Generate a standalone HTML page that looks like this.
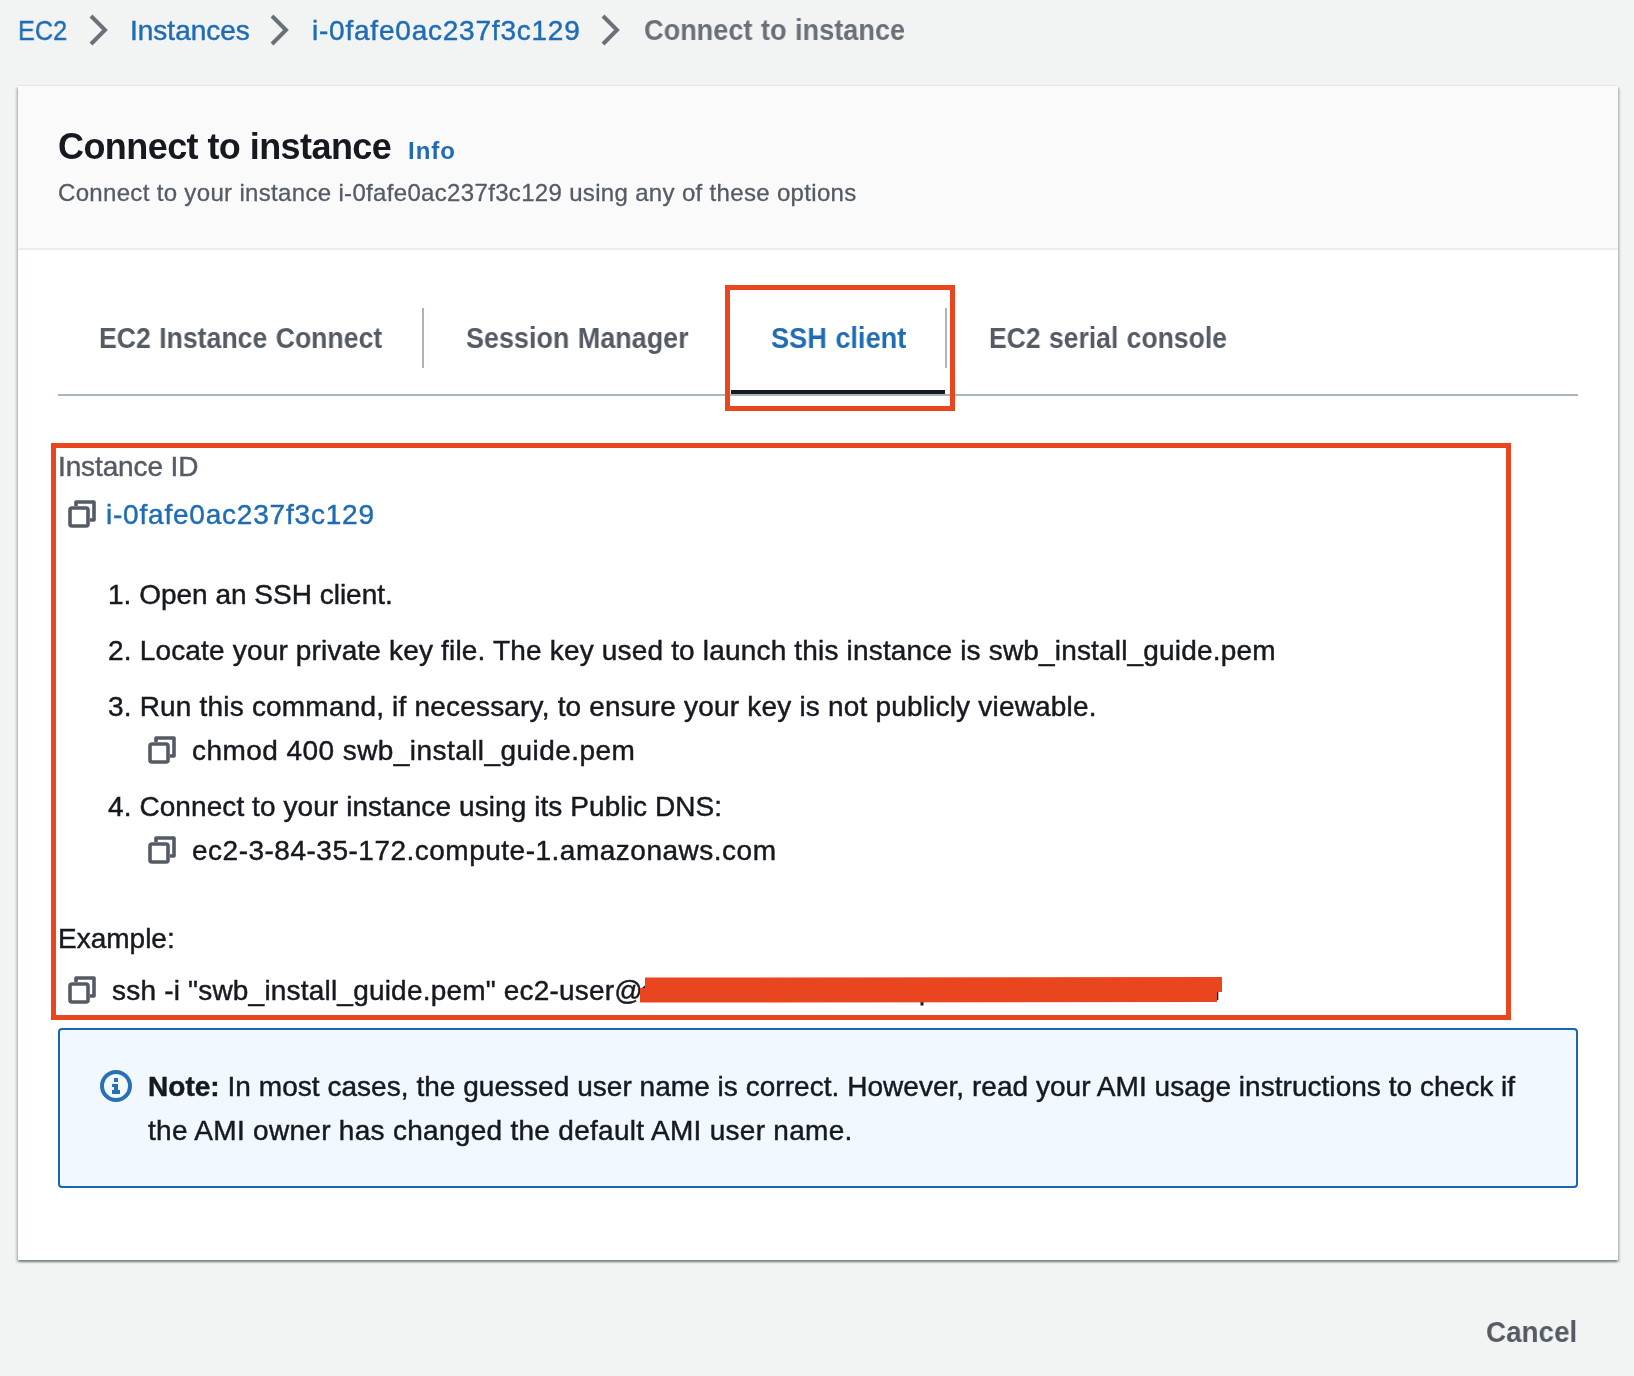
<!DOCTYPE html>
<html>
<head>
<meta charset="utf-8">
<style>
html,body{margin:0;padding:0;background:#f2f3f3;}
body{width:1634px;height:1376px;overflow:hidden;background:#f2f3f3;position:relative;font-family:"Liberation Sans",sans-serif;color:#16191f;}
.t{position:absolute;line-height:0;white-space:nowrap;will-change:transform;}
.r28{font-size:28px;font-weight:400;-webkit-text-stroke:0.45px currentColor;}
.b28{font-size:29px;font-weight:700;}
.blue{color:#1f6cb4;}
.grey{color:#545b64;}
.g2{color:#687078;}
.abs{position:absolute;}
#card{position:absolute;left:18px;top:86px;width:1600px;height:1174px;background:#fff;
  box-shadow:0 2px 2px 0 rgba(0,28,36,.32),2px 2px 2px 0 rgba(0,28,36,.15),-2px 2px 2px 0 rgba(0,28,36,.15),0 -1px 1px 0 rgba(0,28,36,.05);}
#hdr{position:absolute;left:0;top:0;width:1600px;height:162px;background:#fafafa;border-bottom:2px solid #eaeded;}
svg{position:absolute;overflow:visible;}
</style>
</head>
<body>
<!-- breadcrumb -->
<div id="bc1" class="t r28 blue" style="left:18px;top:31px;transform:scaleX(0.9);transform-origin:0 0;">EC2</div>
<svg style="left:0;top:0" width="1" height="1"><polyline points="91,16 105,30 91,44" fill="none" stroke="#687078" stroke-width="4"/></svg>
<div id="bc2" class="t r28 blue" style="left:130px;top:31px;">Instances</div>
<svg style="left:0;top:0" width="1" height="1"><polyline points="272,16 286,30 272,44" fill="none" stroke="#687078" stroke-width="4"/></svg>
<div id="bc3" class="t r28 blue" style="left:312px;top:31px;letter-spacing:0.78px;">i-0fafe0ac237f3c129</div>
<svg style="left:0;top:0" width="1" height="1"><polyline points="603,16 617,30 603,44" fill="none" stroke="#687078" stroke-width="4"/></svg>
<div id="bc4" class="t b28 g2" style="left:643.90px;top:30px;transform:scaleX(0.9352);transform-origin:0 0;word-spacing:1.0px;">Connect to instance</div>

<div id="card">
  <div id="hdr"></div>
</div>

<!-- header -->
<div id="title" class="t" style="left:58px;top:147px;font-size:36px;font-weight:700;color:#16191f;letter-spacing:-0.57px;">Connect to instance</div>
<div id="info" class="t blue" style="left:408px;top:151px;font-size:24px;font-weight:700;letter-spacing:1.0px;">Info</div>
<div id="sub" class="t grey" style="left:58px;top:193px;font-size:24px;-webkit-text-stroke:0.3px currentColor;letter-spacing:0.33px;">Connect to your instance i-0fafe0ac237f3c129 using any of these options</div>

<!-- tabs -->
<div id="tab1" class="t b28 grey" style="left:99.36px;top:338px;transform:scaleX(0.9190);transform-origin:0 0;word-spacing:1.0px;">EC2 Instance Connect</div>
<div class="abs" style="left:422px;top:308px;width:2px;height:60px;background:#aab7b8"></div>
<div id="tab2" class="t b28 grey" style="left:465.75px;top:338px;transform:scaleX(0.9295);transform-origin:0 0;word-spacing:1.0px;">Session Manager</div>
<div id="tab3" class="t b28 blue" style="left:771.13px;top:338px;transform:scaleX(0.9366);transform-origin:0 0;word-spacing:1.0px;">SSH client</div>
<div class="abs" style="left:945px;top:308px;width:2px;height:60px;background:#aab7b8"></div>
<div id="tab4" class="t b28 grey" style="left:988.95px;top:338px;transform:scaleX(0.9156);transform-origin:0 0;word-spacing:1.0px;">EC2 serial console</div>
<div class="abs" style="left:58px;top:394px;width:1520px;height:2px;background:#aab7b8"></div>
<div class="abs" style="left:731px;top:390px;width:214px;height:4px;background:#16191f"></div>

<!-- content -->
<div id="iid" class="t r28 grey" style="left:58px;top:467px;letter-spacing:-0.12px;">Instance ID</div>
<svg style="left:0;top:0" width="1" height="1"><g fill="none" stroke="#545b64" stroke-width="3.6" stroke-linejoin="round"><rect x="70" y="508" width="18" height="18" rx="2"/><path d="M76,506 V502 H94 V520 H90"/></g></svg>
<div id="iidv" class="t r28 blue" style="left:106px;top:515px;letter-spacing:0.79px;">i-0fafe0ac237f3c129</div>

<div id="li1" class="t r28" style="left:108px;top:595px;">1. Open an SSH client.</div>
<div id="li2" class="t r28" style="left:108px;top:651px;letter-spacing:0.175px;">2. Locate your private key file. The key used to launch this instance is swb_install_guide.pem</div>
<div id="li3" class="t r28" style="left:108px;top:707px;letter-spacing:0.19px;">3. Run this command, if necessary, to ensure your key is not publicly viewable.</div>
<svg style="left:80px;top:236px" width="1" height="1"><g fill="none" stroke="#545b64" stroke-width="3.6" stroke-linejoin="round"><rect x="70" y="508" width="18" height="18" rx="2"/><path d="M76,506 V502 H94 V520 H90"/></g></svg>
<div id="cmd1" class="t r28" style="left:192px;top:751px;letter-spacing:0.44px;">chmod 400 swb_install_guide.pem</div>
<div id="li4" class="t r28" style="left:108px;top:807px;letter-spacing:0.083px;">4. Connect to your instance using its Public DNS:</div>
<svg style="left:80px;top:336px" width="1" height="1"><g fill="none" stroke="#545b64" stroke-width="3.6" stroke-linejoin="round"><rect x="70" y="508" width="18" height="18" rx="2"/><path d="M76,506 V502 H94 V520 H90"/></g></svg>
<div id="cmd2" class="t r28" style="left:192px;top:851px;letter-spacing:0.5px;">ec2-3-84-35-172.compute-1.amazonaws.com</div>

<div id="ex" class="t r28" style="left:58px;top:939px;">Example:</div>
<svg style="left:0;top:476px" width="1" height="1"><g fill="none" stroke="#545b64" stroke-width="3.6" stroke-linejoin="round"><rect x="70" y="508" width="18" height="18" rx="2"/><path d="M76,506 V502 H94 V520 H90"/></g></svg>
<div id="ssh" class="t r28" style="left:112px;top:991px;letter-spacing:0.2px;">ssh -i "swb_install_guide.pem" ec2-user@</div>

<!-- alert -->
<div class="abs" style="left:58px;top:1028px;width:1516px;height:156px;border:2px solid #1a66af;border-radius:4px;background:#f1f8ff"></div>
<svg style="left:0;top:0" width="1" height="1"><g fill="#2870b6"><circle cx="116" cy="1086" r="14" fill="none" stroke="#2870b6" stroke-width="4"/><rect x="114" y="1078" width="4" height="4"/><rect x="114" y="1084" width="4" height="10"/><rect x="112" y="1084" width="2" height="3"/><rect x="112" y="1090" width="8" height="4"/></g></svg>
<div id="note1" class="t r28" style="left:148px;top:1087px;letter-spacing:0.036px;"><b>Note:</b> In most cases, the guessed user name is correct. However, read your AMI usage instructions to check if</div>
<div id="note2" class="t r28" style="left:148px;top:1131px;letter-spacing:0.29px;">the AMI owner has changed the default AMI user name.</div>

<div id="cancel" class="t b28 grey" style="left:1486.49px;top:1332px;transform:scaleX(0.9593);transform-origin:0 0;word-spacing:1.0px;">Cancel</div>

<!-- annotations -->
<div class="abs" style="left:725px;top:285px;width:220px;height:116px;border:5px solid #e9461f"></div>
<div class="abs" style="left:51px;top:443px;width:1450px;height:567px;border:5px solid #e9461f"></div>
<svg style="left:0;top:0" width="1" height="1"><rect x="920.5" y="1002" width="3" height="3.5" fill="#16191f"/><rect x="1216.5" y="991" width="1.8" height="9" fill="#16191f"/><path d="M641,990 Q643,985.5 646,985.5 V990 Z" fill="#16191f"/><polygon points="645,977.5 1222,977 1222,992 1217,992 1217,1002 640,1002.5 640,988 645,988" fill="#e9461f"/></svg>
</body>
</html>
